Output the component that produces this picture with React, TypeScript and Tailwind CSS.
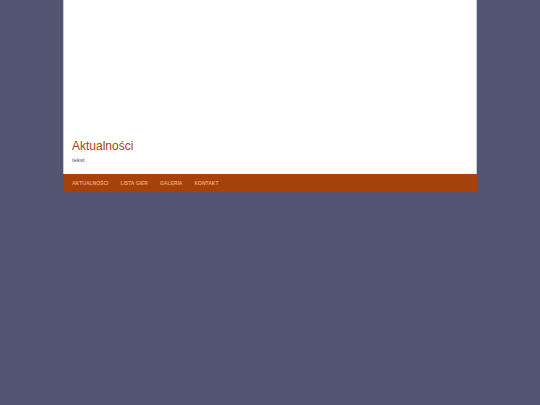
import React from 'react';

interface NavLink {
  label: string;
  href: string;
}

const links: NavLink[] = [
  { label: 'Aktualności', href: '#aktualnosci' },
  { label: 'Lista gier', href: '#lista-gier' },
  { label: 'Galeria', href: '#galeria' },
  { label: 'Kontakt', href: '#kontakt' },
];

function FooterNav() {
  return (
    <nav className="flex gap-3 bg-[#a5410a] px-[9px] py-1">
      {links.map((link) => (
        <a key={link.href} href={link.href} className="text-[5px] leading-[10px] font-bold uppercase text-[#f0a070]">
          {link.label}
        </a>
      ))}
    </nav>
  );
}

export default function App() {
  return (
    <div className="min-h-screen bg-[#525672] font-['Liberation_Sans',sans-serif]">
      <div className="mx-auto w-[414px] max-w-full">
        <main className="border-x border-[#c6cad6] bg-white px-2 pt-[138px] pb-[10px]">
          <h1 className="text-[12px] leading-4 text-[#a5410a]">Aktualności</h1>
          <p className="mt-0.5 text-[6px] leading-2 text-[#525672]">tekst</p>
        </main>
        <FooterNav />
      </div>
    </div>
  );
}
